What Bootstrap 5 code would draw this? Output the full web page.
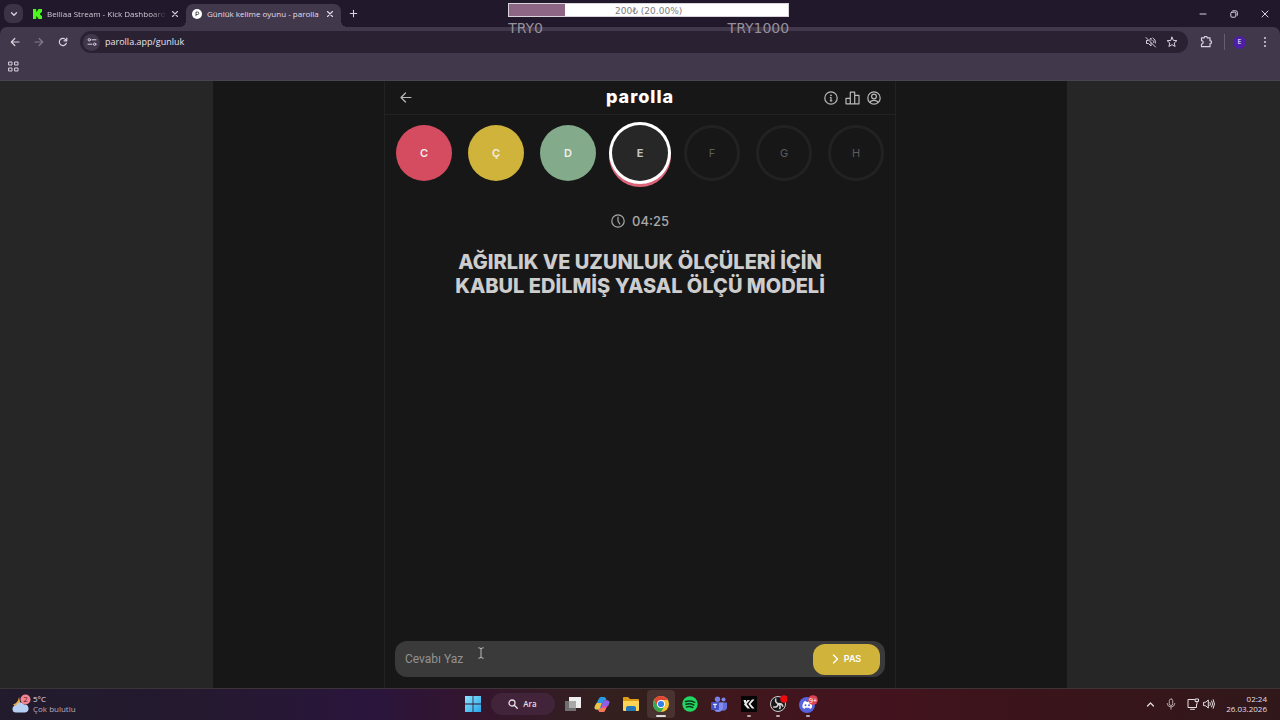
<!DOCTYPE html>
<html lang="tr">
<head>
<meta charset="utf-8">
<meta name="viewport" content="width=device-width, initial-scale=1">
<title>Günlük kelime oyunu - parolla</title>
<link href="https://cdn.jsdelivr.net/npm/bootstrap@5.3.0/dist/css/bootstrap.min.css" rel="stylesheet">
<style>
:root { --ui: "Open Sans", "Noto Sans", sans-serif; --game: Inter, "Liberation Sans", sans-serif; --bar: #41384b; --strip: #21182b; --yellow: #d0b33b; }
body { background: #262626; color: #c9c9c9; font-family: var(--game); overflow: hidden; }
button { color: inherit; background: none; border: 0; padding: 0; display: inline-flex; align-items: center; justify-content: center; }
svg { display: block; flex: none; }
.ln { fill: none; stroke: currentColor; stroke-linecap: round; stroke-linejoin: round; }
.chrome { background: var(--strip); color: #d9d2df; font-family: var(--ui); }
.tabstrip { height: 27px; padding-left: 4px; }
.tabsearch { width: 19px; height: 19px; border-radius: 7px; background: #3c3346; }
.tabitem { height: 23px; font-size: 8px; line-height: 12px; width: 155px; padding: 0 7px 4px 6px; gap: 5px; color: #d0c9d6; }
.tabitem a { color: inherit; text-decoration: none; white-space: nowrap; flex: 1; }
.fade-end { -webkit-mask-image: linear-gradient(90deg, #000 88%, transparent); mask-image: linear-gradient(90deg, #000 88%, transparent); }
.tabitem.current { background: var(--bar); border-radius: 7px 7px 0 0; color: #e4dfe8; position: relative; }
.tabitem.current::before, .tabitem.current::after { content: ""; position: absolute; bottom: 0; width: 6px; height: 6px; }
.tabitem.current::before { right: 100%; background: radial-gradient(circle at 0 0, transparent 6px, var(--bar) 6px); }
.tabitem.current::after { left: 100%; background: radial-gradient(circle at 100% 0, transparent 6px, var(--bar) 6px); }
.winbtns { gap: 22px; padding-right: 11px; }
.winbtns button { width: 9px; }
.toolbar { background: var(--bar); border-radius: 7px 7px 0 0; height: 54px; border-bottom: 1px solid #4a4352; }
.addressrow { height: 30px; padding: 0 12px 0 9px; }
.navbtns { gap: 12px; width: 71px; }
.navbtns button { width: 12px; }
.urlbar { background: #2a2133; border-radius: 11px; height: 22px; padding: 0 10px 0 3px; gap: 5px; }
.urlbar input { background: none; border: 0; outline: 0; color: #e8e3ec; font-size: 9px; padding: 0; min-width: 0; }
.siteinfo { width: 17px; height: 17px; border-radius: 50%; background: #41384b; }
.avatar { width: 13px; height: 13px; border-radius: 50%; background: #4d1fa6; color: #fff; font-size: 7px; }
.goal { top: 3px; left: 39.7%; width: 281px; font-family: "DejaVu Sans", sans-serif; color: #96909c; }
.goalbar { height: 14px; background: #fff; border: 1px solid #d8d4da; }
.goalfill { height: 100%; background: #8d6685; }
.goaltext { inset: 0; font-size: 9px; line-height: 14px; color: #7e7a80; }
.goalends { font-size: 14px; line-height: 22px; }
.stage { width: 66.7%; background: #171717; }
.game { width: 512px; max-width: 100%; border: solid #222; border-width: 0 1px; }
.gamehead { height: 34px; border-bottom: 1px solid #222; padding: 0 14px; color: #b9b9b9; }
.gamehead h1 { font-size: 18px; line-height: 24px; font-weight: 800; color: #fff; letter-spacing: 1px; padding-bottom: 2px; }
.headicons { gap: 7px; }
.letters { gap: 16px; padding: 10px 0 0; font-size: 11px; font-weight: 600; }
.letter { width: 56px; height: 56px; border-radius: 50%; color: #f2efe9; flex: none; }
.wrong { background: #d54c61; } .passed { background: var(--yellow); } .right { background: #82aa8b; }
.waiting { border: 3px solid #222; color: #5c5c5c; font-weight: 400; }
.active-letter { background: #272727; color: #c4c4c4; font-weight: 700; box-shadow: 0 0 0 3px #fff, 0 3px 0 3px #dc6478; }
.timer { margin-top: 30px; gap: 7px; font-size: 13px; line-height: 20px; font-weight: 500; color: #a9a9a9; }
.question { margin: 19px 40px 0; font-size: 20px; line-height: 24px; font-weight: 800; color: #cdcdcd; }
.answer { margin: 0 10px 11px; height: 36px; border-radius: 12px; background: #3a3a3a; padding: 2px 5px 2px 10px; }
.answer input { background: none; border: 0; outline: 0; color: #ddd; font-family: Roboto, sans-serif; font-size: 12px; min-width: 0; padding: 0; }
.answer input::placeholder { color: #929292; opacity: 1; }
.pass { width: 67px; height: 31px; border-radius: 12px; background: var(--yellow); color: #fff; font-size: 9px; font-weight: 600; gap: 5px; }
.pointer { left: 83px; top: 6px; }
.taskbar { height: 32px; display: grid; grid-template-columns: 1fr auto 1fr; border-top: 1px solid #3d3438; color: #e6dfe4; font-family: var(--ui); font-size: 8px; line-height: 10px; padding-bottom: 1px; background: linear-gradient(90deg, #211b2d 0, #24192f 15%, #2a153c 29%, #34152e 37%, #34201f 47%, #321f1c 51%, #40171d 57%, #43131e 68%, #3b141b 80%, #30181a 100%); }
.task { width: 28px; height: 28px; border-radius: 4px; position: relative; }
.task.front { background: #493330; }
.task.open::after { content: ""; position: absolute; bottom: 1px; width: 4px; height: 2px; border-radius: 1px; background: #b9a9ad; }
.task.front::after { width: 10px; background: #ddd; }
.tasks { width: 263px; }
.find { width: 64px; height: 22px; border-radius: 11px; background: #42243a; gap: 5px; }
.tray { padding-right: 13px; gap: 11px; }
</style>
</head>
<body class="d-flex flex-column vh-100">
<header class="chrome position-relative">
  <div class="tabstrip d-flex align-items-end">
    <button class="tabsearch align-self-center" aria-label="Sekme ara"><svg width="8" height="8" viewBox="0 0 8 8"><path class="ln" stroke-width="1.3" d="M1.5 2.8 4 5.3 6.500 2.800"/></svg></button>
    <div class="tabitem d-flex align-items-center">
      <svg class="ms-1" width="9" height="10" viewBox="0 0 9 10"><rect width="9" height="10" fill="#092408"/><path fill="#4cf51f" d="M0 0h3.200v2.500h1V1.200h1V0H9v3.200H8v1H7v1.600h1v1h1V10H5.200V8.800h-1V7.500h-1V10H0z"/></svg>
      <a class="fade-end" href="#">Belliaa Stream - Kick Dashboard</a>
      <button aria-label="Sekmeyi kapat"><svg width="8" height="8" viewBox="0 0 8 8"><path class="ln" stroke-width="1.1" d="m1.500 1.500 5 5m0-5-5 5"/></svg></button>
    </div>
    <div class="tabitem current d-flex align-items-center ms-2">
      <svg width="10" height="10" viewBox="0 0 10 10"><circle cx="5" cy="5" r="5" fill="#fff"/><path d="M4 7.200V3h1.500a1.200 1.200 0 0 1 0 2.500H4" fill="none" stroke="#555" stroke-width="1"/></svg>
      <a href="#">Günlük kelime oyunu - parolla</a>
      <button aria-label="Sekmeyi kapat"><svg width="8" height="8" viewBox="0 0 8 8"><path class="ln" stroke-width="1.1" d="m1.500 1.500 5 5m0-5-5 5"/></svg></button>
    </div>
    <button class="ms-2 align-self-center" aria-label="Yeni sekme"><svg width="9" height="9" viewBox="0 0 9 9"><path class="ln" stroke-width="1.1" d="M4.500 1.300v6.400M1.300 4.500h6.400"/></svg></button>
    <div class="winbtns d-flex ms-auto align-self-center">
      <button aria-label="Küçült"><svg width="8" height="8" viewBox="0 0 8 8"><path class="ln" d="M1 4h6"/></svg></button>
      <button aria-label="Geri yükle"><svg width="8" height="8" viewBox="0 0 8 8"><rect class="ln" x=".8" y="2.200" width="5" height="5" rx="1"/><path class="ln" d="M2.800.8h3a1.500 1.500 0 0 1 1.500 1.500v3"/></svg></button>
      <button aria-label="Kapat"><svg width="8" height="8" viewBox="0 0 8 8"><path class="ln" d="m1 1 6 6m0-6L1 7"/></svg></button>
    </div>
  </div>
  <div class="toolbar">
    <div class="addressrow d-flex align-items-center">
      <div class="navbtns d-flex">
        <button aria-label="Geri"><svg width="10" height="10" viewBox="0 0 10 10"><path class="ln" stroke-width="1.200" d="M9 5H1.300M4.800 1.500 1.300 5l3.500 3.500"/></svg></button>
        <button aria-label="İleri" style="color:#81788b"><svg width="10" height="10" viewBox="0 0 10 10"><path class="ln" stroke-width="1.200" d="M1 5h7.700M5.200 1.500 8.700 5 5.200 8.500"/></svg></button>
        <button aria-label="Yenile"><svg width="10" height="10" viewBox="0 0 10 10"><path class="ln" stroke-width="1.200" d="M8.300 6.200A3.600 3.600 0 1 1 7.700 2.600L8.700 3.600M8.800 1v2.800H6"/></svg></button>
      </div>
      <div class="urlbar d-flex align-items-center flex-grow-1">
        <button class="siteinfo" aria-label="Site bilgileri"><svg width="10" height="10" viewBox="0 0 10 10"><g class="ln"><circle cx="2.300" cy="2.800" r="1.200"/><path d="M5 2.800h4M1 7.200h4"/><circle cx="7.700" cy="7.200" r="1.200"/></g></svg></button>
        <input class="flex-grow-1" aria-label="Adres" value="parolla.app/gunluk">
        <button aria-label="Ses kapalı"><svg width="12" height="12" viewBox="0 0 12 12"><path class="ln" d="M1 1.500 10.500 11M3 4.500H1.500v3h2L6 10V7M6 4.300V2L4.800 3.200M8 4.500q.9.800.8 2M8 2q3 1.500 2.500 5"/></svg></button>
        <button class="ms-1" aria-label="Yer işareti"><svg width="12" height="12" viewBox="0 0 12 12"><path class="ln" d="m6 1.200 1.400 3.200 3.500.3-2.700 2.300.9 3.500L6 8.700l-3.100 1.800.9-3.500L1.100 4.700l3.500-.3z"/></svg></button>
      </div>
      <button class="ms-2" aria-label="Uzantılar" style="width:20px"><svg width="12" height="12" viewBox="0 0 12 12"><path class="ln" stroke-width="1.200" d="M1.500 1.800h2.700a1.500 1.500 0 0 1 3 0h2.800v2.900a1.500 1.500 0 0 1 0 3v3h-8.500V8a1.700 1.700 0 0 0 0-3.400z"/></svg></button>
      <span class="vr ms-2" style="height:12px;align-self:center"></span>
      <button class="avatar ms-2 me-3" aria-label="Profil">E</button>
      <button aria-label="Menü"><svg width="6" height="12" viewBox="0 0 6 12" fill="currentColor"><circle cx="3" cy="2" r="1"/><circle cx="3" cy="6" r="1"/><circle cx="3" cy="10" r="1"/></svg></button>
    </div>
    <div class="d-flex ps-2 pt-1"><button aria-label="Uygulamalar"><svg width="11" height="11" viewBox="0 0 11 11"><g class="ln"><path d="M1 1h3v3H1zM7 1h3v3H7zM1 7h3v3H1zM7 7h3v3H7z"/></g></svg></button></div>
  </div>
  <div class="goal position-absolute">
    <div class="goalbar position-relative"><div class="goalfill" style="width:20%"></div><span class="goaltext position-absolute text-center">200₺ (20.00%)</span></div>
    <div class="goalends d-flex justify-content-between"><span>TRY0</span><span>TRY1000</span></div>
  </div>
</header>

<main class="stage flex-grow-1 mx-auto d-flex justify-content-center">
  <section class="game d-flex flex-column">
    <div class="gamehead row g-0 align-items-center">
      <div class="col d-flex"><button aria-label="Geri dön"><svg width="13" height="13" viewBox="0 0 13 13"><path class="ln" stroke-width="1.200" d="M12 6.500H2M6.500 2 2 6.500 6.500 11"/></svg></button></div>
      <h1 class="col-auto m-0">parolla</h1>
      <div class="col d-flex justify-content-end headicons">
        <button aria-label="Bilgi"><svg width="14" height="14" viewBox="0 0 14 14"><g class="ln" stroke-width="1.200"><circle cx="7" cy="7" r="6.200"/><path d="M6.300 6.500H7v3.300M6.300 9.800h1.600"/></g><circle cx="7" cy="4.300" r=".9" fill="currentColor"/></svg></button>
        <button aria-label="İstatistikler"><svg width="15" height="14" viewBox="0 0 15 14"><path class="ln" stroke-width="1.200" d="M1 12.800V7.300h4.300v5.500zM5.300 12.800V1.200h4.400v11.600zM9.700 12.800V4.300H14v8.500z"/></svg></button>
        <button aria-label="Hesap"><svg width="14" height="14" viewBox="0 0 14 14"><g class="ln" stroke-width="1.200"><circle cx="7" cy="7" r="6.200"/><circle cx="7" cy="5.500" r="2.400"/><path d="M3 11.500C3.500 9.800 5 9.300 7 9.300s3.500.5 4 2.200"/></g></svg></button>
      </div>
    </div>
    <div class="letters d-flex justify-content-center">
      <span class="letter wrong d-flex align-items-center justify-content-center">C</span>
      <span class="letter passed d-flex align-items-center justify-content-center">Ç</span>
      <span class="letter right d-flex align-items-center justify-content-center">D</span>
      <span class="letter active-letter d-flex align-items-center justify-content-center">E</span>
      <span class="letter waiting d-flex align-items-center justify-content-center">F</span>
      <span class="letter waiting d-flex align-items-center justify-content-center">G</span>
      <span class="letter waiting d-flex align-items-center justify-content-center">H</span>
    </div>
    <div class="timer d-flex justify-content-center align-items-center"><svg width="14" height="14" viewBox="0 0 14 14"><g class="ln" stroke-width="1.200"><circle cx="7" cy="7" r="6.200"/><path d="M7 3.200V7l1.800 3"/></g></svg><span>04:25</span></div>
    <h2 class="question text-center">AĞIRLIK VE UZUNLUK ÖLÇÜLERİ İÇİN<br>KABUL EDİLMİŞ YASAL ÖLÇÜ MODELİ</h2>
    <form class="answer d-flex align-items-center mt-auto position-relative">
      <input class="flex-grow-1" aria-label="Cevap" placeholder="Cevabı Yaz">
      <svg class="pointer position-absolute" width="6" height="12" viewBox="0 0 6 12"><path class="ln" stroke="#aaa" stroke-width=".9" d="M.8.8Q3 .8 3 2Q3 .8 5.200.8M3 2v8M.8 11.200Q3 11.200 3 10q0 1.200 2.200 1.200"/></svg>
      <button type="button" class="pass"><svg width="7" height="10" viewBox="0 0 7 10"><path class="ln" stroke-width="1.300" d="m1.500 1 4 4-4 4"/></svg>PAS</button>
    </form>
  </section>
</main>

<footer class="taskbar align-items-center">
  <div class="d-flex align-items-center" style="gap:2px;padding-left:12px">
    <svg width="19" height="20" viewBox="0 0 19 20"><path d="M7 3Q6 9 1 10.500 4 14 9 12z" fill="#e8a83d"/><path d="M4 18.500a3.500 3.500 0 0 1 0-7 4.500 4.500 0 0 1 8-1 4 4 0 0 1 1 8z" fill="#b8cff4"/><circle cx="13.500" cy="5.500" r="5" fill="#f28490"/><text x="13.500" y="8.300" font-size="8" text-anchor="middle" fill="#51202c">2</text></svg>
    <div>5°C<br><span style="color:#b7afbd">Çok bulutlu</span></div>
  </div>
  <nav class="d-flex align-items-center gap-1">
    <button class="task" aria-label="Başlat"><svg width="16" height="16" viewBox="0 0 16 16"><defs><linearGradient id="w" x2="1" y2="1"><stop stop-color="#8be3fd"/><stop offset="1" stop-color="#28a6ec"/></linearGradient></defs><path fill="url(#w)" d="M0 0h7.600v7.600H0zM8.400 0H16v7.600H8.400zM0 8.400h7.600V16H0zM8.400 8.400H16V16H8.400z"/></svg></button>
    <button class="find fw-semibold"><svg width="10" height="10" viewBox="0 0 10 10"><g class="ln" stroke-width="1.300"><circle cx="4" cy="4" r="3"/><path d="m6.300 6.300 3 3"/></g></svg>Ara</button>
    <div class="tasks d-flex justify-content-between">
      <button class="task" aria-label="Görev görünümü"><svg width="16" height="15" viewBox="0 0 16 15"><path fill="#eee" d="M4 0h12v11H4z"/><path fill="#707070" d="M0 4h11v10H0z"/><path fill="#a8a8a8" d="M4 4h7v7H4z"/></svg></button>
      <button class="task" aria-label="Copilot"><svg width="16" height="15" viewBox="0 0 16 15"><path fill="#269ce6" d="M5 1.500Q5.500 0 7 0h3q1.500 0 2 1.500l.5 2H9.500L7 11q-.5 1.500-2 1.500H2.500Q0 12.500.8 9.500z"/><path fill="#f1c33d" d="M.8 9.500Q2 6 3 6h4.500L6 11q-.5 1.500-2 1.500H2.500Q0 12.500.8 9.500"/><path fill="#e04fa8" d="M11 13.500q-.5 1.500-2 1.500H6.500q-1.500 0-2-1.500L4 12q2 .5 3-1l2.500-7.500H13Q16 3.500 15.200 6z"/><path fill="#8a60e8" d="M9.500 3.500H13Q16 3.500 15.200 6l-1 3H7.700z"/><path fill="#f37c52" d="M11 13.500q-.5 1.500-2 1.500H6.500q-1.500 0-2-1.500L4 12q2 .5 3-1h5z"/></svg></button>
      <button class="task" aria-label="Dosya Gezgini"><svg width="16" height="14" viewBox="0 0 16 14"><path fill="#dc9d19" d="M0 1q0-1 1-1h4l2 2h8q1 0 1 1v3H0z"/><path fill="#fcd557" d="M0 4h16v9q0 1-1 1H1q-1 0-1-1z"/><path fill="#2277b8" d="M3 14v-3q0-2 2-2h6q2 0 2 2v3z"/></svg></button>
      <button class="task open front" aria-label="Chrome"><svg width="16" height="16" viewBox="0 0 16 16"><circle cx="8" cy="8" r="8" fill="#f5c531"/><path fill="#df4538" d="M1.100 4A8 8 0 0 1 14.900 4H8L4.500 10z"/><path fill="#36a852" d="M1.100 4 4.500 10 8 12l3.500-2L8 16A8 8 0 0 1 1.100 4"/><circle cx="8" cy="8" r="4" fill="#fff"/><circle cx="8" cy="8" r="3.100" fill="#347ee9"/></svg></button>
      <button class="task" aria-label="Spotify"><svg width="16" height="16" viewBox="0 0 16 16"><circle cx="8" cy="8" r="7.700" fill="#22d760"/><path fill="none" stroke="#10361d" stroke-linecap="round" stroke-width="1.500" d="M3.500 5.500q5-1.500 9.200.8M4 8.300q4.200-1.200 7.800.7M4.500 10.900q3.500-.9 6.300.6"/></svg></button>
      <button class="task" aria-label="Teams"><svg width="16" height="16" viewBox="0 0 16 16"><circle cx="6.500" cy="3.300" r="2.700" fill="#7580e8"/><circle cx="12.500" cy="3.500" r="2" fill="#7d87e9"/><path fill="#6670dc" d="M9 6.500h7v5q-1 4-5 3z"/><path fill="#828bef" d="M3 6.500h9V12q-1 4-5 4t-4-4z"/><rect y="6" width="8" height="8" rx="1" fill="#4650c5"/><path stroke="#fff" d="M2 8.300h4M4 8.300V12"/></svg></button>
      <button class="task open" aria-label="Kick yayını"><svg width="16" height="16" viewBox="0 0 16 16"><path fill="#050505" d="M0 0h16v16H0z"/><path fill="#eee" d="M2.500 4H5v2L3.500 7.500zM6.500 4H9L5.500 8 9 12.500H6.500L3 8.500zM11 3.500h2.500L9.500 8l4 4.500H11L7.300 8z"/></svg></button>
      <button class="task open" aria-label="OBS"><svg width="18" height="18" viewBox="0 0 18 18"><circle cx="9" cy="9" r="7.500" fill="#17171b" stroke="#d5d0d2"/><path fill="none" stroke="#d9d5d7" stroke-width="1.500" d="M7 3.500q-1.500 3.500 2 5.200 4-1 5 3M9 8.700q0 4-4.800 3.300M9 8.700q3.500 2 1.500 5.500"/><circle cx="15" cy="4" r="3.700" fill="#f0090d"/></svg></button>
      <button class="task open" aria-label="Discord"><svg width="20" height="19" viewBox="0 0 20 19"><circle cx="9" cy="10" r="8" fill="#5563de"/><path fill="#fff" d="M6 6.500 8 6l.5 1h1.500l.5-1 2 .5q2 3 1.500 6L12 14l-.8-1.300H7.300L6.500 14l-2-1.500q-.5-3 1.500-6"/><circle cx="7.500" cy="10.300" r="1" fill="#5563de"/><circle cx="11" cy="10.300" r="1" fill="#5563de"/><circle cx="15" cy="5" r="4.800" fill="#da4351"/><text x="15" y="7.500" font-size="7" text-anchor="middle" fill="#fff">9+</text></svg></button>
    </div>
  </nav>
  <div class="tray d-flex align-items-center justify-content-end">
    <svg width="9" height="9" viewBox="0 0 9 9"><path class="ln" stroke-width="1.200" d="m1.500 6 3-3 3 3"/></svg>
    <svg width="10" height="12" viewBox="0 0 10 12" style="color:#b6a7aa"><g class="ln"><rect x="3.300" y="1" width="3.400" height="6.500" rx="1.700"/><path d="M1.200 5.500Q1.500 9 5 9t3.800-3.500M5 9v2.200"/></g></svg>
    <div class="d-flex align-items-center gap-1"><svg width="12" height="12" viewBox="0 0 12 12"><path class="ln" d="M7.500 1.500H1v8h8.500V6.500M3.500 11.300h4M8.500 1h3v2.500h-3zM10 3.500V6"/></svg>
    <svg width="12" height="12" viewBox="0 0 12 12"><path class="ln" d="M1 4.300h1.500L5.300 2v8L2.500 7.700H1zM7 4.500q1 1.500 0 3M8.700 3q2 3 0 6M10.300 1.700q2.500 4.300 0 8.600"/></svg></div>
    <time class="text-end">02:24<br>26.03.2026</time>
  </div>
</footer>
<script src="https://cdn.jsdelivr.net/npm/bootstrap@5.3.0/dist/js/bootstrap.bundle.min.js"></script>
</body>
</html>
